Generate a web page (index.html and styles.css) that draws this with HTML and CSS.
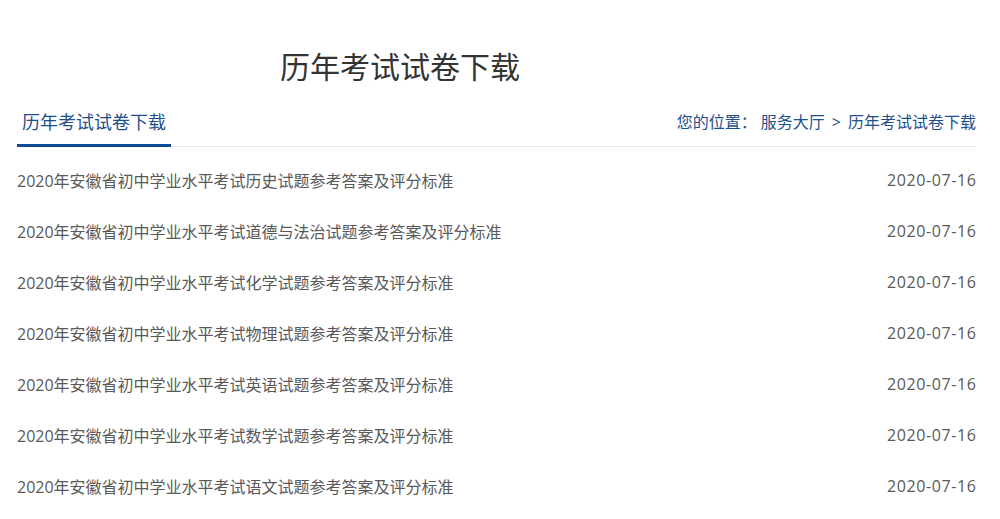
FILE: index.html
```html
<!DOCTYPE html>
<html>
	<head>
		<meta charset="utf-8" />
		<meta name="viewport" content="width=device-width, initial-scale=1" />
		<title>历年考试试卷下载</title>
		<link rel="stylesheet" href="styles.css">
	</head>
	<body>
		<div id="page">
			<h1 class="page-title">历年考试试卷下载</h1>
			<div class="tab-bar">
				<span class="tab active">历年考试试卷下载</span>
				<div class="crumbs">您的位置： <a href="#">服务大厅</a><span class="sep">&gt;</span><a href="#">历年考试试卷下载</a></div>
			</div>
			<ul class="list">
				<li><a href="#">2020年安徽省初中学业水平考试历史试题参考答案及评分标准</a><span class="date">2020-07-16</span></li>
				<li><a href="#">2020年安徽省初中学业水平考试道德与法治试题参考答案及评分标准</a><span class="date">2020-07-16</span></li>
				<li><a href="#">2020年安徽省初中学业水平考试化学试题参考答案及评分标准</a><span class="date">2020-07-16</span></li>
				<li><a href="#">2020年安徽省初中学业水平考试物理试题参考答案及评分标准</a><span class="date">2020-07-16</span></li>
				<li><a href="#">2020年安徽省初中学业水平考试英语试题参考答案及评分标准</a><span class="date">2020-07-16</span></li>
				<li><a href="#">2020年安徽省初中学业水平考试数学试题参考答案及评分标准</a><span class="date">2020-07-16</span></li>
				<li><a href="#">2020年安徽省初中学业水平考试语文试题参考答案及评分标准</a><span class="date">2020-07-16</span></li>
			</ul>
		</div>
	</body>
</html>
```

FILE: styles.css
```css
body {
	margin: 0; padding: 0;
	background-color: #fff;
	font: 16px "Open Sans", "Noto Sans CJK SC", sans-serif;
	color: #595959;
}
a { text-decoration: none; }
#page {
	padding: 0 24px 0 17px;
}
.page-title {
	margin: 0; padding: 46px 0 0 263px;
	font-size: 30px; font-weight: normal;
	line-height: 42px;
	color: #333;
}
.tab-bar {
	display: flex; justify-content: space-between; align-items: flex-end;
	margin-top: 21px;
	border-bottom: 1px solid #e8e8e8;
}
.tab {
	padding: 0 5px 9px 5px;
	margin-bottom: -1px;
	font-size: 18px; line-height: 26px;
	color: #1d4f8c;
	border-bottom: 3px solid #0d4c94;
}
.crumbs {
	padding-bottom: 12px;
	font-size: 16px; line-height: 24px;
	color: #1d4f8c;
}
.crumbs a { color: #1d4f8c; }
.crumbs .sep { margin: 0 7px; }
.list {
	list-style: none;
	margin: 0; padding: 7px 0 0 0;
}
.list li {
	display: flex; justify-content: space-between; align-items: center;
	height: 51px;
}
.list a { color: #595959; }
.date {
	letter-spacing: 0.6px;
	margin-right: -0.6px;
}
```
